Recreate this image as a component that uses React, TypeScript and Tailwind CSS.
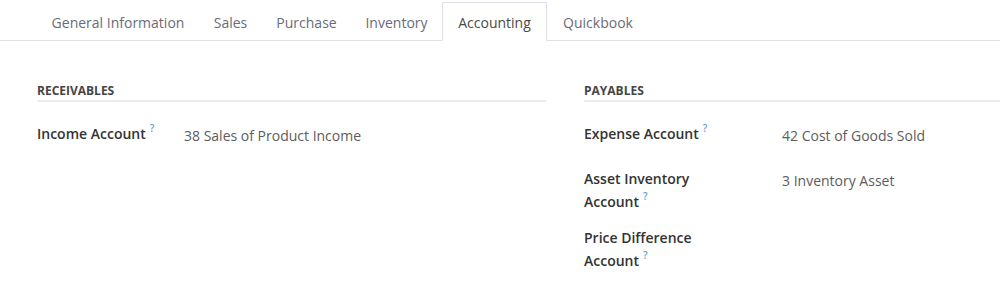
const tabs = [
  { label: "General Information", w: "w-[162px]" },
  { label: "Sales", w: "w-[63px]" },
  { label: "Purchase", w: "w-[89px]" },
  { label: "Inventory", w: "w-[91px]" },
  { label: "Accounting", w: "w-[105px]" },
  { label: "Quickbook", w: "w-[102px]" },
];

function Help() {
  return (
    <span className="inline-block align-top ml-[4px] text-[10px] leading-[12px] font-semibold text-[#5ea3cf]">?</span>
  );
}

function Field({ label, value, labelCol }: { label: string; value?: string; labelCol: string }) {
  return (
    <div className="flex min-h-[32px] mb-[13px]">
      <div className={`${labelCol} shrink-0`}>
        <div className="max-w-[130px] text-sm leading-[23px] font-semibold text-[#333333]">
          {label}
          <Help />
        </div>
      </div>
      {value && <div className="pt-[2px] text-sm leading-[23px] text-[#5c5c5c]">{value}</div>}
    </div>
  );
}

function Section({ title, children }: { title: string; children: React.ReactNode }) {
  return (
    <div>
      <div className="text-[12px] leading-[16px] font-bold uppercase text-[#454545] pb-px border-b-2 border-[#ececec]">
        {title}
      </div>
      <div className="mt-[20px]">{children}</div>
    </div>
  );
}

export default function App() {
  return (
    <div className="w-[1000px] h-[282px] overflow-hidden bg-white" style={{ fontFamily: '"Open Sans", "Noto Sans", sans-serif' }}>
      <ul className="flex items-end h-[41px] pl-[37px] border-b border-[#dee2e6]">
        {tabs.map((t) => {
          const active = t.label === "Accounting";
          return (
            <li
              key={t.label}
              className={
                active
                  ? `${t.w} h-[39px] -mb-px pt-[1px] flex items-center justify-center border border-b-0 border-[#dee2e6] bg-white text-sm text-[#4a4a4a]`
                  : `${t.w} h-[39px] -mb-px pt-[1px] flex items-center justify-center border border-b-0 border-transparent text-sm text-[#6b6b78]`
              }
            >
              {t.label}
            </li>
          );
        })}
      </ul>

      <div className="grid grid-cols-[509px_509px] gap-[38px] pl-[37px] mt-[42px]">
        <Section title="Receivables">
          <Field label="Income Account" value="38 Sales of Product Income" labelCol="w-[147px]" />
        </Section>
        <Section title="Payables">
          <Field label="Expense Account" value="42 Cost of Goods Sold" labelCol="w-[198px]" />
          <Field label="Asset Inventory Account" value="3 Inventory Asset" labelCol="w-[198px]" />
          <Field label="Price Difference Account" labelCol="w-[198px]" />
        </Section>
      </div>
    </div>
  );
}
